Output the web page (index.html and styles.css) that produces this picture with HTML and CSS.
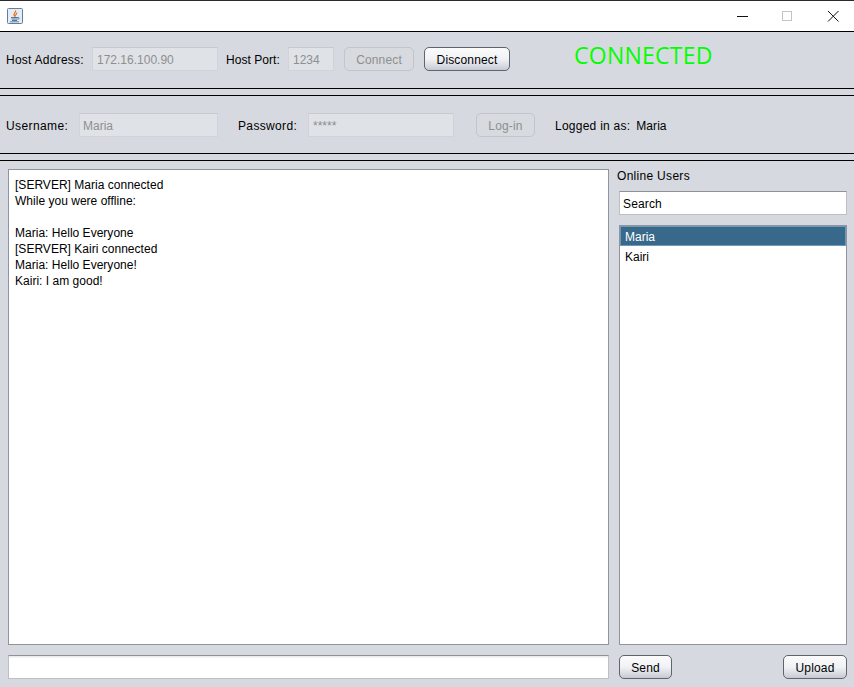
FILE: index.html
```html
<!DOCTYPE html>
<html lang="en">
<head>
<meta charset="utf-8">
<title>Chat Client</title>
<link rel="stylesheet" href="styles.css">
</head>
<body>
<div class="window">
  <header class="titlebar">
    <svg class="app-icon" width="16" height="16" viewBox="0 0 16 16">
      <rect x="0.500" y="0.500" width="15" height="15" rx="1" fill="#e6ecf3" stroke="#5f7f9e"/>
      <path d="M8.500 2.500C9.500 4 6.800 5 7 6.800c.1.700.5 1.200.9 1.500-.1-1.200 2.300-2 1.900-3.600" fill="none" stroke="#e8701a" stroke-width="1.200"/>
      <path d="M4 9.500h7M4.500 11h6M5 12.500h5" stroke="#3f6a90" stroke-width="0.900" fill="none"/>
      <path d="M11 9.500c1.800-.3 1.800 1.500-.5 1.800" stroke="#3f6a90" stroke-width="0.800" fill="none"/>
      <path d="M3 13.800h9" stroke="#3f6a90" stroke-width="0.800"/>
    </svg>
    <div class="win-controls">
      <svg class="win-btn" width="46" height="30" viewBox="0 0 46 30"><path d="M21 15.500h11" stroke="#111" stroke-width="1"/></svg>
      <svg class="win-btn" width="46" height="30" viewBox="0 0 46 30"><rect x="20.500" y="10.500" width="9" height="9" fill="none" stroke="#c4c4c4"/></svg>
      <svg class="win-btn" width="46" height="30" viewBox="0 0 46 30"><path d="M20 10l10.500 10.500M30.500 10L20 20.500" stroke="#111" stroke-width="1"/></svg>
    </div>
  </header>

  <section class="panel panel-host">
    <label class="lbl lbl-host">Host Address:</label>
    <div class="field field-off f-host">172.16.100.90</div>
    <label class="lbl lbl-port">Host Port:</label>
    <div class="field field-off f-port">1234</div>
    <button class="btn btn-off b-connect" disabled>Connect</button>
    <button class="btn b-disconnect">Disconnect</button>
    <div class="status">CONNECTED</div>
  </section>

  <div class="gap-strip"></div>

  <section class="panel panel-login">
    <label class="lbl lbl-user">Username:</label>
    <div class="field field-off f-user">Maria</div>
    <label class="lbl lbl-pass">Password:</label>
    <div class="field field-off f-pass">*****</div>
    <button class="btn btn-off b-login" disabled>Log-in</button>
    <span class="lbl logged">Logged in as:</span>
    <span class="lbl logged-name">Maria</span>
  </section>

  <div class="gap-strip"></div>

  <main class="chat">
    <div class="messages">
      <div>[SERVER] Maria connected</div>
      <div>While you were offline:</div>
      <div class="blank">&nbsp;</div>
      <div>Maria: Hello Everyone</div>
      <div>[SERVER] Kairi connected</div>
      <div>Maria: Hello Everyone!</div>
      <div>Kairi: I am good!</div>
    </div>
    <aside class="users">
      <div class="users-title">Online Users</div>
      <div class="field search">Search</div>
      <ul class="user-list">
        <li class="user selected">Maria</li>
        <li class="user">Kairi</li>
      </ul>
    </aside>
    <div class="field compose"></div>
    <div class="actions">
      <button class="btn b-send">Send</button>
      <button class="btn b-upload">Upload</button>
    </div>
  </main>
</div>
</body>
</html>
```
FILE: styles.css
```css
* { box-sizing: border-box; }
html, body { margin: 0; padding: 0; }
body {
  width: 854px;
  height: 687px;
  overflow: hidden;
  background: #d6d9df;
  font-family: "Liberation Sans", Arial, sans-serif;
  font-size: 12px;
  color: #000;
}
.window { display: flex; flex-direction: column; height: 687px; }

.titlebar {
  height: 32px;
  flex: none;
  background: #fff;
  border-top: 1px solid #2b2b2b;
  border-bottom: 1px solid #000;
  display: flex;
  align-items: center;
  justify-content: space-between;
  padding-left: 7px;
}
.app-icon { display: block; }
.win-controls { display: flex; }
.win-btn { display: block; }

.panel {
  flex: none;
  display: flex;
  align-items: center;
  background: #d6d9df;
  padding-left: 6px;
}
.panel-host { height: 56px; padding-bottom: 2px; }
.panel-login { height: 57px; }

.gap-strip {
  flex: none;
  height: 8px;
  border-top: 1px solid #000;
  border-bottom: 1px solid #000;
}

.lbl { white-space: nowrap; line-height: 15px; color: #000; letter-spacing: 0.25px; padding-top: 3px; }
.panel-login .lbl { padding-top: 4px; }

.field {
  height: 24px;
  line-height: 24px;
  padding: 0 4px;
  background: #fff;
  border: 1px solid #bdbfc3;
  border-top-color: #8f9297;
  color: #000;
}
.field-off {
  background: #dfe2e6;
  border-color: #d0d3d8;
  border-top-color: #c6c9ce;
  color: #8e8f91;
}

.btn {
  height: 24px;
  padding: 2px 0 0;
  font: inherit;
  letter-spacing: 0.15px;
  color: #000;
  border: 1px solid #5f656e;
  border-radius: 5px;
  background: linear-gradient(#fbfbfc 0%, #f1f2f5 50%, #d4d7de 85%, #c6c9d1 100%);
  text-align: center;
}
.btn-off {
  color: #8e8f91;
  border-color: #c2c5cb;
  background: #d7dade;
}

.lbl-host { width: 86px; }
.f-host { width: 126px; }
.lbl-port { width: 62px; margin-left: 8px; letter-spacing: 0.05px; }
.f-port { width: 46px; }
.b-connect { width: 70px; margin-left: 10px; }
.b-disconnect { width: 86px; margin-left: 10px; }
.status {
  margin-left: 64px;
  margin-top: -9px;
  font-family: "Open Sans", "DejaVu Sans", sans-serif;
  font-size: 23px;
  letter-spacing: 0.25px;
  line-height: 30px;
  color: #00ff00;
}

.lbl-user { width: 73px; letter-spacing: 0.4px; }
.f-user { width: 139px; padding-left: 3px; }
.lbl-pass { width: 70px; margin-left: 20px; letter-spacing: 0.35px; }
.f-pass { width: 146px; }
.b-login { width: 59px; margin-left: 22px; }
.logged { margin-left: 20px; }
.logged-name { margin-left: 6px; letter-spacing: 0.05px; }

.chat {
  flex: 1;
  display: grid;
  grid-template-columns: 601px 228px;
  grid-template-rows: 476px 24px;
  column-gap: 10px;
  row-gap: 10px;
  padding: 8px 0 0 8px;
}
.messages {
  background: #fff;
  border: 1px solid #8f949e;
  padding: 7px 6px;
  line-height: 16px;
  letter-spacing: 0.02px;
}
.users { display: flex; flex-direction: column; min-height: 0; }
.users-title { margin-left: -2px; height: 14px; line-height: 14px; letter-spacing: 0.3px; }
.search { flex: none; margin-top: 8px; padding-left: 3px; letter-spacing: 0.15px; }
.user-list {
  flex: 1;
  margin: 10px 0 0;
  padding: 0;
  list-style: none;
  background: #fff;
  border: 1px solid #8f949e;
}
.user { height: 20px; line-height: 22px; padding-left: 5px; }
.selected {
  background: #39698a;
  color: #fff;
  border: 1px solid #7096b8;
  line-height: 20px;
  padding-left: 4px;
}
.compose { background: linear-gradient(#e9ebec 0, #e9ebec 1px, #fff 2px); }
.actions { display: flex; justify-content: space-between; }
.b-send { width: 53px; }
.b-upload { width: 64px; }
```
